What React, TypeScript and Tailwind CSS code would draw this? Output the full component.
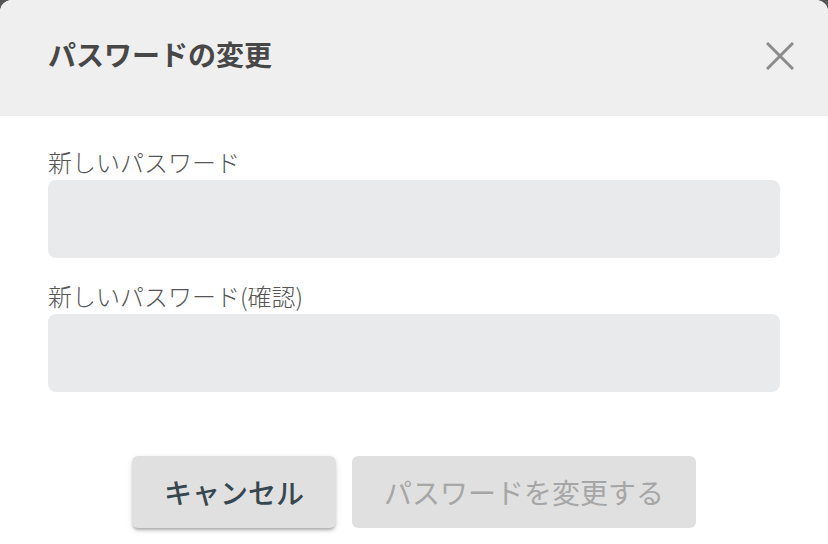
export default function App() {
  return (
    <div
      className="w-[828px] h-[544px] bg-[#555555] overflow-hidden"
      style={{ fontFamily: '"Noto Sans CJK JP", "Noto Sans", sans-serif' }}
    >
      <div className="h-full bg-white rounded-t-[12px] overflow-hidden flex flex-col">
        {/* Header */}
        <header className="h-[116px] shrink-0 bg-[#efefef] pl-12 pr-[34px] pb-[8px] flex items-center justify-between">
          <h1 className="text-[28px] leading-9 font-bold text-[#474747]">
            パスワードの変更
          </h1>
          <button className="w-[28px] h-[28px] mt-[4px] flex items-center justify-center">
            <svg width="28" height="28" viewBox="0 0 28 28">
              <path
                d="M1 1 L27 27 M27 1 L1 27"
                stroke="#8c8c8c"
                strokeWidth="3"
                fill="none"
              />
            </svg>
          </button>
        </header>

        {/* Form */}
        <div className="px-12 pt-[28px]">
          <label className="block text-[24px] leading-9 font-light text-[#555555]">
            新しいパスワード
          </label>
          <div className="h-[78px] rounded-[8px] bg-[#e8eaeb]" />
          <label className="block mt-5 text-[24px] leading-9 font-light text-[#555555]">
            新しいパスワード(確認)
          </label>
          <div className="h-[78px] rounded-[8px] bg-[#e8eaeb]" />
        </div>

        {/* Actions */}
        <div className="mt-16 flex justify-center gap-4">
          <button className="h-[72px] w-[204px] rounded-[6px] bg-[#e0e0e0] text-[28px] font-medium text-[#37474f] shadow-[0_3px_3px_-1px_rgba(0,0,0,0.25),0_2px_6px_0_rgba(0,0,0,0.12)]">
            キャンセル
          </button>
          <button
            disabled
            className="h-[72px] w-[344px] rounded-[6px] bg-[#e0e0e0] text-[28px] text-[#a6a6a6]"
          >
            パスワードを変更する
          </button>
        </div>
      </div>
    </div>
  )
}
